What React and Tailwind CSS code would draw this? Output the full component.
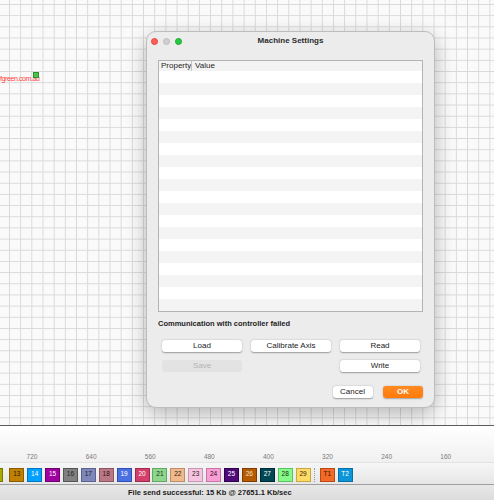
import React from "react";

const swatches = [
  { n: "13", cls: "bg-[#c08000] border-[#8a5c00] text-[#2a1a00]" },
  { n: "14", cls: "bg-[#00a0ff] border-[#0078c0] text-white" },
  { n: "15", cls: "bg-[#a000a0] border-[#700070] text-white" },
  { n: "16", cls: "bg-[#808080] border-[#555555] text-[#222222]" },
  { n: "17", cls: "bg-[#7d87b9] border-[#5a6290] text-[#1c1c30]" },
  { n: "18", cls: "bg-[#bb7784] border-[#8e5560] text-[#2a1418]" },
  { n: "19", cls: "bg-[#4a6fe3] border-[#3050b0] text-white" },
  { n: "20", cls: "bg-[#d33f6a] border-[#a02a4e] text-white" },
  { n: "21", cls: "bg-[#8cd78b] border-[#62a862] text-[#1a2e1a]" },
  { n: "22", cls: "bg-[#f0b98d] border-[#c08d66] text-[#2e1e10]" },
  { n: "23", cls: "bg-[#f6c4e1] border-[#c896b4] text-[#2e1a26]" },
  { n: "24", cls: "bg-[#fa9ed4] border-[#c874a6] text-[#2e1024]" },
  { n: "25", cls: "bg-[#500a78] border-[#300050] text-white" },
  { n: "26", cls: "bg-[#b45a00] border-[#7e3e00] text-[#f4e0c8]" },
  { n: "27", cls: "bg-[#004754] border-[#002a32] text-white" },
  { n: "28", cls: "bg-[#86fa88] border-[#5cc45e] text-[#102a10]" },
  { n: "29", cls: "bg-[#ffdb66] border-[#c8a840] text-[#2e2408]" },
];

const ruler = ["720", "640", "560", "480", "400", "320", "240", "160"];

const Button = ({ children, className = "" }) => (
  <div
    className={`h-[12px] flex items-center justify-center rounded-[3px] bg-white text-[8px] leading-none text-[#222] shadow-[0_0.5px_1.5px_rgba(0,0,0,0.35)] ${className}`}
  >
    {children}
  </div>
);

const App = () => {
  return (
    <div className="w-[494px] h-[500px] overflow-hidden flex flex-col font-['Liberation_Sans',Arial,sans-serif] bg-white">
      {/* Canvas */}
      <div className="relative h-[426px] shrink-0 border-b border-[#5c5c5c] bg-[#fafafa] bg-[linear-gradient(to_right,#d9d9d9_1px,transparent_1px),linear-gradient(to_bottom,#d9d9d9_1px,transparent_1px)] bg-[size:11.18px_11.18px] bg-[position:9px_4px]">
        <div className="absolute left-0 top-[75px] text-[7px] leading-none text-[#ff3b3b] tracking-[-0.4px] whitespace-nowrap">
          fgreen.com.au
        </div>
        <div className="absolute left-[33px] top-[72px] w-[6px] h-[6px] bg-[#4cc24c] border border-[#2f8f2f]" />

        {/* Machine Settings window */}
        <div className="absolute left-[146px] top-[31px] w-[289px] h-[377px] rounded-[10px] bg-[#ececec] border border-[#bdbdbd] shadow-[0_6px_20px_rgba(0,0,0,0.28)] flex flex-col">
          <div className="relative h-[18px] shrink-0 flex items-center justify-center">
            <div className="absolute left-[4px] top-[5.5px] flex gap-[5px]">
              <div className="w-[7px] h-[7px] rounded-full bg-[#ff5f57] border border-[#e0443e]" />
              <div className="w-[7px] h-[7px] rounded-full bg-[#d0d0d0] border border-[#bcbcbc]" />
              <div className="w-[7px] h-[7px] rounded-full bg-[#28c840] border border-[#1aab29]" />
            </div>
            <span className="text-[8px] font-bold text-[#2b2b2b]">Machine Settings</span>
          </div>

          <div className="px-[11px] pt-[10px]">
            {/* Property table */}
            <div className="w-[265px] h-[252px] border border-[#b4b4b4] bg-white overflow-hidden">
              <div className="h-[10px] flex bg-[#f3f3f3] text-[8px] leading-none text-[#1e1e1e]">
                <div className="w-[33px] pl-[2px] overflow-hidden whitespace-nowrap border-r border-[#c4c4c4] flex items-center">
                  Property
                </div>
                <div className="pl-[3px] flex items-center">Value</div>
              </div>
              {Array.from({ length: 20 }).map((_, i) => (
                <div
                  key={i}
                  className={`h-[12px] ${i % 2 === 0 ? "bg-white" : "bg-[#f4f4f4]"}`}
                />
              ))}
            </div>

            <div className="mt-[7px] text-[7.5px] leading-[9px] font-bold text-[#1e1e1e]">
              Communication with controller failed
            </div>
          </div>

          <div className="pl-[15px] mt-[11.5px] flex gap-[9px]">
            <Button className="w-[80px]">Load</Button>
            <Button className="w-[80px]">Calibrate Axis</Button>
            <Button className="w-[80px]">Read</Button>
          </div>
          <div className="pl-[15px] mt-[8.5px] flex gap-[9px]">
            <div className="w-[80px] h-[12px] flex items-center justify-center rounded-[3px] bg-[#e3e3e3] text-[8px] leading-none text-[#b4b4b4]">
              Save
            </div>
            <div className="w-[80px]" />
            <Button className="w-[80px]">Write</Button>
          </div>
          <div className="pr-[11px] mt-[13.5px] flex justify-end gap-[10.5px]">
            <Button className="w-[40px]">Cancel</Button>
            <div className="w-[40px] h-[12px] flex items-center justify-center rounded-[3px] bg-[linear-gradient(#ff8a22,#ff7a0a)] text-[8px] leading-none font-bold text-white shadow-[0_0.5px_1.5px_rgba(0,0,0,0.3)]">
              OK
            </div>
          </div>
        </div>
      </div>

      {/* Ruler */}
      <div className="h-[36px] shrink-0 flex items-end pl-[2.5px] pb-[1px] bg-[linear-gradient(#ffffff,#f0f0f0)]">
        {ruler.map((r) => (
          <div key={r} className="w-[59.1px] text-center text-[6.5px] leading-[8px] text-[#7a7a7a]">
            {r}
          </div>
        ))}
      </div>

      {/* Layer swatches */}
      <div className="h-[22px] shrink-0 flex items-start pt-[4.5px] gap-[2.9px] border-t border-[#e2e2e2] bg-[linear-gradient(#f6f6f6,#e6e6e6)]">
        <div className="-ml-[12px] mr-[3.4px] w-[15px] h-[14px] shrink-0 border border-[#787800] bg-[#a8a800] flex items-center justify-center text-[6.5px] text-[#222]">
          12
        </div>
        {swatches.map((s) => (
          <div
            key={s.n}
            className={`w-[15px] h-[14px] shrink-0 border flex items-center justify-center text-[6.5px] leading-none ${s.cls}`}
          >
            {s.n}
          </div>
        ))}
        <div className="ml-[0.4px] mr-[2px] h-[14px] border-l border-dotted border-[#9a9a9a]" />
        <div className="w-[15px] h-[14px] shrink-0 border border-[#b84a18] bg-[#f36926] flex items-center justify-center text-[6.5px] leading-none text-[#2a1206]">
          T1
        </div>
        <div className="w-[15px] h-[14px] shrink-0 border border-[#0a70a4] bg-[#0c96d9] flex items-center justify-center text-[6.5px] leading-none text-white">
          T2
        </div>
      </div>

      {/* Status bar */}
      <div className="h-[16px] shrink-0 border-t border-[#9e9e9e] bg-[linear-gradient(#e8e8e8,#dcdcdc)] flex items-center pl-[128px] text-[7.5px] font-bold text-[#1a1a1a] whitespace-nowrap">
        File send successful: 15 Kb @ 27651.1 Kb/sec
      </div>
    </div>
  );
};

export default App;
